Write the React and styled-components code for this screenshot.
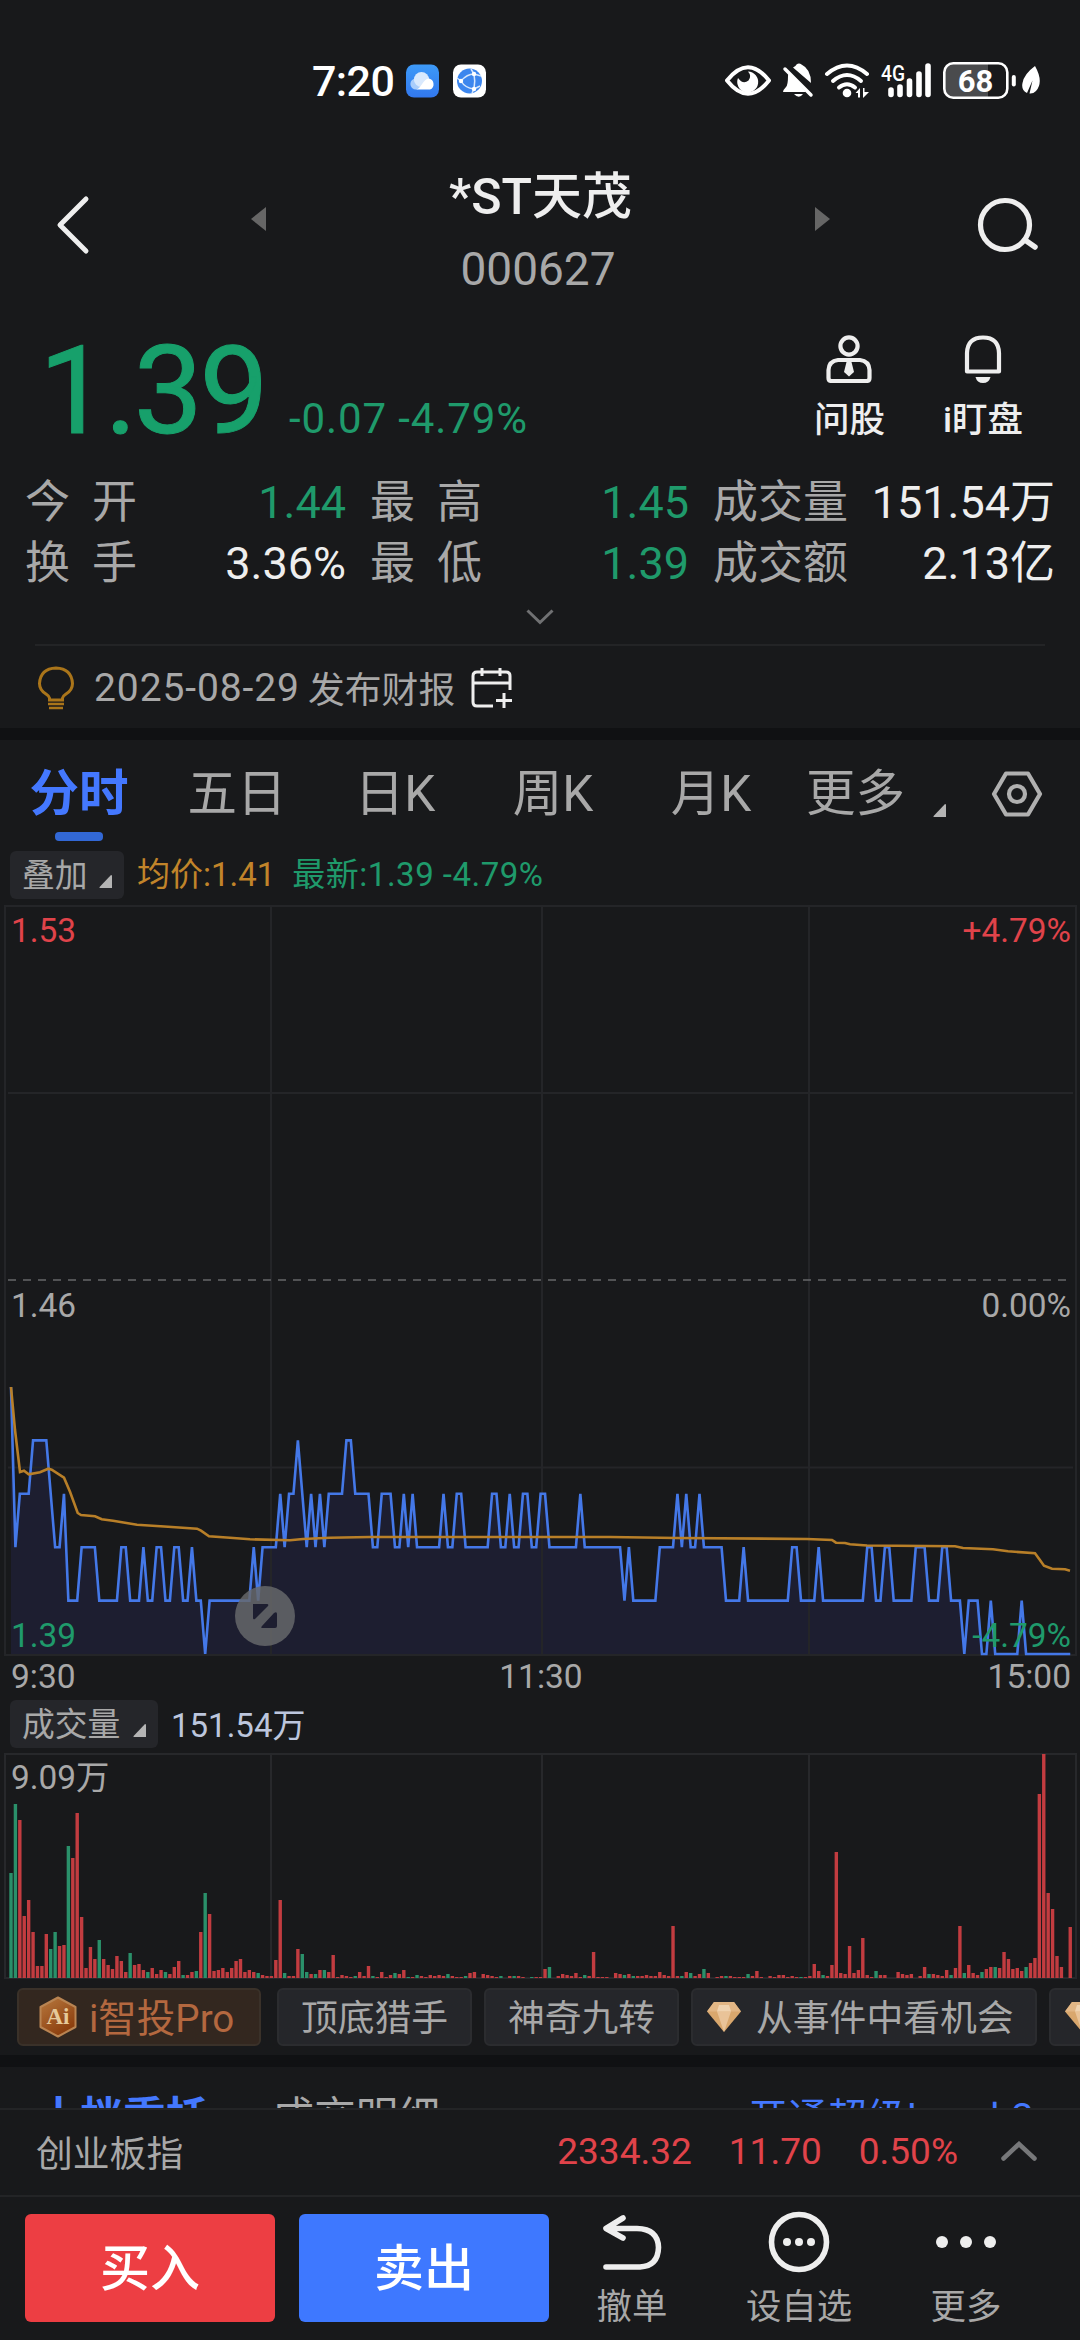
import { useState } from 'react';
import styled, { createGlobalStyle } from 'styled-components';

const GREEN = '#1f9a6b';
const RED = '#e0434a';
const BLUE = '#4478ff';
const GREY = '#a8a8a8';
const WHITE = '#eeeeee';

const GlobalStyle = createGlobalStyle`
  body {
    margin: 0;
    background: #18191b;
  }

  * {
    box-sizing: border-box;
  }

  svg {
    display: block;
    flex: none;
  }
`;

const Screen = styled.div`
  width: 1080px;
  height: 2340px;
  display: flex;
  flex-direction: column;
  overflow: hidden;
  background: #18191b;
  color: ${GREY};
  font-family: Roboto, 'Noto Sans CJK SC', sans-serif;
  white-space: nowrap;
`;

// status bar
const StatusBar = styled.div`
  height: 162px;
  display: flex;
  align-items: center;
  padding: 0 38px 0 312px;
  color: #fff;
`;

const Clock = styled.div`
  width: 93px;
  font-size: 43px;
  font-weight: 500;
  letter-spacing: -0.6px;
`;

const StatusIcons = styled.div`
  margin-left: auto;
  display: flex;
  align-items: center;
`;

// header
const Header = styled.header`
  height: 148px;
  display: flex;
  justify-content: space-between;
  padding: 0 40px 0 54px;
`;

const TitleNav = styled.div`
  flex: 1;
  display: flex;
  justify-content: space-between;
  padding: 0 146px 0 ${(props) => props.$left}px;
`;

const HeadIcon = styled.div`
  padding-top: ${(props) => props.$top}px;
`;

const Title = styled.div`
  padding-top: 5px;
  text-align: center;

  h1 {
    margin: 0;
    color: ${WHITE};
    font-size: 50px;
    font-weight: 500;
    line-height: 60px;
  }

  p {
    margin: 17px 0 0;
    padding-right: 5px;
    font-size: 46px;
    line-height: 50px;
  }
`;

// price
const Quote = styled.section`
  height: 162px;
  display: flex;
  padding: 16px 57px 0 39px;
`;

const Price = styled.div`
  width: 250px;
  color: #17a06b;
  font-size: 123px;
  font-weight: 400;
  line-height: 130px;
  letter-spacing: -3.4px;
  -webkit-text-stroke: 1px #17a06b;
`;

const Change = styled.div`
  padding-top: 68px;
  color: ${GREEN};
  font-size: 42px;
  line-height: 50px;
  letter-spacing: 0.9px;
`;

const Shortcuts = styled.div`
  margin-left: auto;
  display: flex;
  gap: 58px;
  padding-top: 9px;
`;

const Shortcut = styled.div`
  display: flex;
  flex-direction: column;
  align-items: center;
  gap: 16px;
  color: ${WHITE};
  font-size: 35.5px;
  font-weight: 500;
  line-height: 42px;
`;

const Stats = styled.section`
  display: grid;
  grid-template-columns: 321px 319px 342px;
  grid-auto-rows: 61px;
  column-gap: 24px;
  padding-left: 25px;
`;

const Stat = styled.div`
  display: flex;
  justify-content: space-between;
  font-size: 45px;
  line-height: 61px;
`;

const StatLabel = styled.div`
  min-width: 112px;
  display: flex;
  justify-content: space-between;
`;

const StatValue = styled.div`
  color: ${(props) => (props.$down ? GREEN : WHITE)};
`;

const Expander = styled.div`
  height: 52px;
  margin: 0 35px;
  padding-top: 15px;
  display: flex;
  justify-content: center;
  border-bottom: 2px solid #232426;
`;

const Notice = styled.div`
  height: 82px;
  display: flex;
  align-items: center;
  padding: 2px 0 0 37px;
  font-size: 36.8px;

  .date {
    width: 214px;
    margin-left: 19px;
    font-size: 39px;
    letter-spacing: 0.9px;
  }

  .text {
    margin-right: 16px;
    padding-bottom: 3px;
  }
`;

const Band = styled.div`
  height: 12px;
  flex: none;
  background: #101113;
`;

// chart tabs
const Tabs = styled.nav`
  height: 106px;
  display: grid;
  grid-template-columns: repeat(5, 158px) 1fr;
  font-size: 49.5px;
  line-height: 108px;
`;

const Tab = styled.div`
  position: relative;
  text-align: center;
  cursor: pointer;
  color: ${(props) => (props.$active ? BLUE : GREY)};
  font-weight: ${(props) => (props.$active ? 700 : 400)};

  &::after {
    content: '';
    display: ${(props) => (props.$active ? 'block' : 'none')};
    position: absolute;
    left: 55px;
    bottom: 7px;
    width: 48px;
    height: 9px;
    border-radius: 4px;
    background: #3268d6;
  }
`;

const MoreTab = styled.div`
  display: flex;
  align-items: center;
  padding-left: 16px;

  .corner {
    margin: 32px 45px 0 28px;
  }
`;

const Legend = styled.div`
  height: ${(props) => props.$height}px;
  display: flex;
  align-items: flex-start;
  padding: ${(props) => props.$top}px 0 0 10px;
  font-size: 33px;
  line-height: 48px;
`;

const Picker = styled.div`
  width: ${(props) => props.$width}px;
  height: 48px;
  display: flex;
  align-items: center;
  justify-content: space-between;
  padding: 2px 12px 0;
  border-radius: 6px;
  background: #25262a;
  font-size: 32.8px;

  svg {
    margin-top: 10px;
  }
`;

const LegendItem = styled.div`
  margin-left: ${(props) => props.$gap}px;
  padding-top: ${(props) => props.$top || 0}px;
  color: ${(props) => props.$color};
  letter-spacing: ${(props) => props.$spacing || 0}px;
`;

const ChartBox = styled.div`
  position: relative;
  height: ${(props) => props.$height}px;
`;

const AxisLabel = styled.span`
  position: absolute;
  ${(props) => (props.$right ? 'right: 9px;' : 'left: 11px;')}
  top: ${(props) => props.$top}px;
  color: ${(props) => props.$color || GREY};
  font-size: 33.4px;
  line-height: 40px;
`;

const ZoomButton = styled.div`
  position: absolute;
  left: 235px;
  top: 681px;
  width: 60px;
  height: 60px;
  display: flex;
  align-items: center;
  justify-content: center;
  border-radius: 50%;
  background: rgba(104, 105, 107, 0.83);
`;

const TimeAxis = styled.div`
  height: 39px;
  display: grid;
  grid-template-columns: 1fr 1fr 1fr;
  padding: 0 9px 0 11px;
  font-size: 33.5px;
  line-height: 39px;

  span:nth-child(2) {
    text-align: center;
  }

  span:nth-child(3) {
    text-align: right;
  }
`;

// tool chips
const Chips = styled.div`
  height: 74px;
  display: flex;
  gap: 12px;
  padding: 7px 0 0 17px;
  overflow: hidden;
`;

const Chip = styled.div`
  width: ${(props) => props.$width}px;
  height: 58px;
  flex: none;
  display: flex;
  align-items: center;
  justify-content: ${(props) => (props.$icon ? 'flex-start' : 'center')};
  padding-left: ${(props) => (props.$icon ? 14 : 0)}px;
  border: 2px solid #2b2c2f;
  border-radius: 6px;
  background: #25262a;
  font-size: 36.8px;

  span {
    padding-bottom: 4px;
  }

  svg + span {
    margin-left: 15px;
  }
`;

const ProChip = styled(Chip)`
  margin-right: 4px;
  padding-left: 20px;
  border-color: #3a3129;
  background: #33271f;
  color: #b4683f;
  font-size: 38.5px;

  svg + span {
    margin-left: 12px;
  }
`;

const PanelTabs = styled.div`
  height: 41px;
  display: flex;
  padding: 26px 46px 0 37px;
  overflow: hidden;
  font-size: 42px;
  line-height: 50px;

  .active {
    width: 235px;
    color: ${BLUE};
    font-size: 43px;
    font-weight: 700;
  }

  .link {
    margin-left: auto;
    color: ${BLUE};
    font-size: 39px;
    letter-spacing: 0.6px;
  }
`;

// bottom area
const IndexBar = styled.div`
  height: 89px;
  display: flex;
  align-items: center;
  padding: 0 43px 4px 36px;
  border-top: 2px solid #232426;
  border-bottom: 2px solid #232426;
  font-size: 36.8px;

  .figures {
    margin-left: auto;
    display: flex;
    gap: 37px;
    margin-right: 43px;
    padding-top: 2px;
    color: ${RED};
    font-size: 37px;
  }
`;

const Actions = styled.footer`
  height: 143px;
  display: flex;
  padding: 14px 0 0 25px;
`;

const TradeButton = styled.button`
  width: 250px;
  height: 108px;
  margin: 3px 24px 0 0;
  padding: 2px 0 0;
  border: 0;
  border-radius: 6px;
  background: ${(props) => props.$color};
  color: #fff;
  font: 500 50px/106px Roboto, 'Noto Sans CJK SC', sans-serif;
`;

const Action = styled.div`
  width: ${(props) => props.$width}px;
  display: flex;
  flex-direction: column;
  align-items: center;
  font-size: 35.4px;
  line-height: 44px;

  svg {
    margin-bottom: 12px;
  }
`;

// minute index and price step above 1.39
const PRICE = [
  [0, 5], [1, 2], [2, 3], [4, 3], [5, 4], [8, 4], [10, 2], [11, 2], [12, 3], [13, 1], [15, 1], [16, 2],
  [19, 2], [20, 1], [24, 1], [25, 2], [26, 2], [27, 1], [29, 1], [30, 2], [31, 1], [32, 1], [33, 2],
  [34, 2], [35, 1], [36, 1], [37, 2], [38, 2], [39, 1], [40, 1], [41, 2], [42, 1], [43, 1], [44, 0],
  [45, 1], [54, 1], [55, 2], [56, 1], [57, 2], [60, 2], [61, 3], [62, 2], [63, 3], [64, 3], [65, 4],
  [67, 2], [68, 3], [69, 2], [70, 3], [71, 2], [72, 3], [75, 3], [76, 4], [77, 4], [78, 3], [81, 3],
  [82, 2], [83, 2], [84, 3], [86, 3], [87, 2], [88, 2], [89, 3], [90, 2], [91, 3], [92, 2], [97, 2],
  [98, 3], [99, 2], [100, 2], [101, 3], [102, 3], [103, 2], [108, 2], [109, 3], [110, 3], [111, 2],
  [112, 2], [113, 3], [114, 2], [115, 2], [116, 3], [117, 3], [118, 2], [119, 2], [120, 3], [121, 3],
  [122, 2], [128, 2], [129, 3], [130, 2], [138, 2], [139, 1], [140, 2], [141, 1], [146, 1], [147, 2],
  [150, 2], [151, 3], [152, 2], [153, 3], [154, 2], [155, 2], [156, 3], [157, 2], [161, 2], [162, 1],
  [165, 1], [166, 2], [167, 1], [176, 1], [177, 2], [178, 2], [179, 1], [182, 1], [183, 2], [184, 1],
  [193, 1], [194, 2], [195, 2], [196, 1], [197, 1], [198, 2], [199, 2], [200, 1], [204, 1], [205, 2],
  [207, 2], [208, 1], [210, 1], [211, 2], [212, 2], [213, 1], [215, 1], [216, 0], [217, 1], [219, 1],
  [220, 0], [221, 0], [222, 1], [223, 0], [228, 0], [229, 1], [230, 0], [240, 0],
];

const AVERAGE =
  '11,482 15,525 20,567 24,565.7 28.7,569.3 40,567.3 48.3,563.7 51.7,564.7 64,572.7 70,586.7 77.7,608 ' +
  '81,610 95,611.3 101.7,614.3 113,615.7 125,617.7 137,619.7 168,621.7 197,623.7 201,625.7 209,631.3 ' +
  '230,632.7 250,634.3 290,635.3 303,634 330,632.7 370,632 610,632 677,633 807,634 832,635 836,637.7 ' +
  '845,638 850,639.3 867,640.5 955,641.3 963,643 993,644.3 1008,646.3 1035,648.3 1039,653.7 1044,660.7 ' +
  '1052,663.7 1065,664.3 1070,665.7';

// bar heights per minute, negative ones are drawn green
const VOLUME = [
  -105, -174, 158, 62, 78, 46, 12, 12, 44, -29, -46, 32, 33, -132, 120, 165, 61, 10, 31, 19,
  -38, 19, 13, 9, 22, 17, 6, -25, 13, 14, 8, -6, 10, 4, 8, -6, 4, 11, 17, -3,
  3, 6, -7, 46, -85, 64, 7, 8, 10, 6, 10, 17, 19, 6, 8, 6, -5, 3, 2, 2,
  18, 78, -5, 2, 2, 29, -24, -6, 4, -4, 8, -8, 6, 23, 1, 3, 2, 1, -2, 6,
  2, 12, -2, 1, 6, 1, 3, -5, 4, 8, -1, 1, -3, 2, 1, 3, 2, 3, 2, -4,
  2, 1, 1, -2, 5, 6, 0, 4, 3, 2, 1, -2, 0, 2, -2, 2, 1, 0, -1, 1,
  1, 9, -11, 0, 2, 4, 3, 2, 5, 1, -3, 2, 26, 1, 1, 1, 0, 5, 4, -3,
  4, -2, 2, 2, 3, 2, 2, 6, 3, 2, 52, 2, -2, 6, -5, 2, 4, -9, 5, 0,
  1, 2, -2, 2, 1, 1, 1, -4, 2, 7, 1, 0, 2, 1, 3, 3, 1, 2, 1, -1,
  1, 2, 14, 7, -3, 2, 13, 126, 5, 4, 32, 5, 8, 40, 3, 1, -7, 3, 3, 0,
  0, 6, 4, 3, 4, 0, 2, 11, -4, 4, 3, 2, 8, -3, 10, 52, -5, 13, 5, 3,
  -6, 9, 11, -11, 10, 26, 19, 9, 10, 7, -11, 15, 20, 184, 224, 85, 69, 22, 11, 0,
  51,
];

const minuteX = (i) => 11 + i * 4.4135;

const stats = [
  { label: '今开', value: '1.44', down: true },
  { label: '最高', value: '1.45', down: true },
  { label: '成交量', value: '151.54万' },
  { label: '换手', value: '3.36%' },
  { label: '最低', value: '1.39', down: true },
  { label: '成交额', value: '2.13亿' },
];

const Corner = ({ size = 13, className }) => (
  <svg className={className} width={size} height={size} viewBox="0 0 13 13">
    <path d="M12 0Q13 0 13 1V13H1Q0 13 .6 12Z" fill="#b4b4b4" />
  </svg>
);

const AppIcons = () => (
  <svg width="82" height="34" viewBox="0 0 82 34">
    <defs>
      <linearGradient id="sky" x1="0" y1="0" x2="0" y2="1">
        <stop offset="0" stopColor="#3d9af8" />
        <stop offset="1" stopColor="#3278ee" />
      </linearGradient>
    </defs>
    <rect x="1" y="0.5" width="33" height="33" rx="8" fill="url(#sky)" />
    <circle cx="11" cy="20" r="5.6" fill="#a9cdfb" />
    <circle cx="16.5" cy="15.5" r="7.6" fill="#d9e9fd" />
    <path d="M11 25.500C16 25 18 15 24 14.500A5.800 5.800 0 0 1 25 25.500Z" fill="#fff" />
    <rect x="48" y="0.500" width="33" height="33" rx="8" fill="#fff" />
    <circle cx="64.500" cy="17" r="12.500" fill="#3c86ee" />
    <g fill="none" stroke="#d6e7fd" strokeWidth="1.500">
      <path d="M56 17Q62 10 69 10Q70.500 17 69 25Q60 24 56 17M69 10L66 5M69 10L76 12M69 25L75 22M69 25L67 29M56 17L52 14" />
    </g>
    <circle cx="56" cy="17" r="2.200" fill="#fff" />
    <circle cx="69" cy="10" r="2.200" fill="#fff" />
    <circle cx="69" cy="25" r="2.200" fill="#fff" />
  </svg>
);

// eye, muted bell, wifi, signal, battery and leaf
const SystemIcons = () => (
  <svg width="320" height="40" viewBox="722 61 320 40">
    <path d="M727 80.500Q748 54 769 80.500Q748 107 727 80.500Z" fill="none" stroke="#fff" strokeWidth="4" strokeLinejoin="round" />
    <path d="M738 78A10.500 10.500 0 1 0 748 71.500Q752 76 748.500 80.500Q743 85 738 78Z" fill="#fff" />
    <path d="M783 92Q783 90 786 87Q788 85 788 76Q788 74 789 73L806 92Z" fill="#fff" />
    <path d="M793 67.500Q796 66 796.500 64.500Q799 62.500 801.500 64.500Q811 69 811 83Z" fill="#fff" />
    <path d="M785 69L811 95" stroke="#fff" strokeWidth="3.500" strokeLinecap="round" />
    <path d="M794 94H803Q799 99.500 794 94Z" fill="#fff" />
    <g fill="none" stroke="#fff" strokeWidth="4" strokeLinecap="round">
      <path d="M827 74Q847 57 867 74" />
      <path d="M833 81Q847 69 861 81" />
      <path d="M839 87.500Q847 81 855 87.500" />
    </g>
    <circle cx="847" cy="93" r="4.300" fill="#fff" />
    <path d="M855.500 93L860 88V97.500H858V93ZM863 88H864.500V92H869L863 98Z" fill="#fff" />
    <text x="881" y="80.500" fontSize="22" fontWeight="500" fill="#fff" textLength="24" lengthAdjust="spacingAndGlyphs">4G</text>
    <g stroke="#fff" strokeWidth="5.600" strokeLinecap="round">
      <path d="M891 90V94.500M900 87V94.500M909.500 81V94.500M919 74V94.500M928 66V94.500" />
    </g>
    <path d="M953 64H988V97H953Q945 97 945 89V72Q945 64 953 64Z" fill="#4a4b4d" />
    <rect x="944.300" y="63.300" width="63" height="34.500" rx="9" fill="none" stroke="#fff" strokeWidth="2.600" />
    <text x="975.500" y="92" fontSize="31" fontWeight="700" fill="#fff" textAnchor="middle">68</text>
    <path d="M1013.800 77V84.500" stroke="#fff" strokeWidth="4" strokeLinecap="round" />
    <path d="M1035 66Q1044 82 1036 91Q1033 94 1029.500 93.500L1032.500 80.500L1027 93Q1021 90 1022.500 83Q1024 74 1035 66Z" fill="#fff" />
  </svg>
);

const Diamond = () => (
  <svg width="34" height="30" viewBox="0 0 34 30">
    <path d="M7 0H27L34 9.500L17 30L0 9.500Z" fill="#d9a76d" />
    <path d="M7 0H27L34 9.500H0Z" fill="#e2b685" />
    <path d="M10 9.500H24L17 30Z" fill="#e9c398" />
    <path d="M12 3H22L24 9.500H10Z" fill="#f0d3b0" />
  </svg>
);

const PriceChart = () => {
  const line = PRICE.map(([i, step]) => `${minuteX(i)},${749 - step * 53.4}`).join(' ');

  return (
    <ChartBox $height={752}>
      <svg width="1080" height="752" viewBox="0 0 1080 752">
        <polygon points={`11,749 ${line}`} fill="#1d1e30" />
        <g stroke="#242528" strokeWidth="2" fill="none">
          <rect x="5" y="1" width="1071" height="749" />
          <path d="M271 1V750M542 1V750M809 1V750" />
          <path d="M8 188H1073M8 562.500H1073" />
        </g>
        <path d="M8 375H1073" stroke="#66676a" strokeWidth="1.500" strokeDasharray="8 7" />
        <polyline points={line} fill="none" stroke="#4478e8" strokeWidth="2.600" />
        <polyline points={AVERAGE} fill="none" stroke="#b87f28" strokeWidth="2.600" />
      </svg>
      <AxisLabel $top={6} $color={RED}>1.53</AxisLabel>
      <AxisLabel $top={6} $color={RED} $right>+4.79%</AxisLabel>
      <AxisLabel $top={381}>1.46</AxisLabel>
      <AxisLabel $top={381} $right>0.00%</AxisLabel>
      <AxisLabel $top={711} $color={GREEN}>1.39</AxisLabel>
      <AxisLabel $top={711} $color={GREEN} $right>-4.79%</AxisLabel>
      <ZoomButton>
        <svg width="26" height="26" viewBox="0 0 26 26" fill="#1d1e30">
          <path d="M1 1H15Q17 1 16 3L3 16Q1 17 1 15Z" />
          <path d="M25 11V23Q25 25 23 25H11Q8 25 10 23L22 10Q25 8 25 11Z" />
        </svg>
      </ZoomButton>
    </ChartBox>
  );
};

const VolumeChart = () => (
  <ChartBox $height={229}>
    <svg width="1080" height="229" viewBox="0 0 1080 229">
      <g stroke="#27282b" strokeWidth="2" fill="none">
        <rect x="5" y="2" width="1071" height="224" />
        <path d="M271 2V226M542 2V226M809 2V226" />
      </g>
      {VOLUME.map((v, i) => (
        <rect
          key={i}
          x={minuteX(i) - 1.7}
          y={226 - Math.abs(v)}
          width="3.4"
          height={Math.abs(v)}
          fill={v < 0 ? '#2a906a' : '#c23c40'}
        />
      ))}
    </svg>
    <AxisLabel $top={6}>9.09万</AxisLabel>
  </ChartBox>
);

const App = () => {
  const [tab, setTab] = useState('分时');

  return (
    <>
      <GlobalStyle />
      <Screen>
        <StatusBar>
          <Clock>7:20</Clock>
          <AppIcons />
          <StatusIcons>
            <SystemIcons />
          </StatusIcons>
        </StatusBar>

        <Header>
          <HeadIcon $top={33}>
            <svg width="36" height="60" viewBox="0 0 36 60">
              <path d="M32 4L6 30L32 56" fill="none" stroke={WHITE} strokeWidth="5" strokeLinecap="round" strokeLinejoin="round" />
            </svg>
          </HeadIcon>
          <TitleNav $left={161}>
            <HeadIcon $top={45}>
              <svg width="15" height="24" viewBox="0 0 15 24"><path d="M15 0V24L0 12Z" fill="#666" /></svg>
            </HeadIcon>
            <Title>
              <h1>*ST天茂</h1>
              <p>000627</p>
            </Title>
            <HeadIcon $top={45}>
              <svg width="15" height="24" viewBox="0 0 15 24"><path d="M0 0V24L15 12Z" fill="#666" /></svg>
            </HeadIcon>
          </TitleNav>
          <HeadIcon $top={34}>
            <svg width="64" height="60" viewBox="0 0 64 60">
              <circle cx="29" cy="29" r="24.500" fill="none" stroke={WHITE} strokeWidth="5.200" />
              <path d="M49 44L59 51" stroke={WHITE} strokeWidth="5.500" strokeLinecap="round" />
            </svg>
          </HeadIcon>
        </Header>

        <Quote>
          <Price>1.39</Price>
          <Change>-0.07 -4.79%</Change>
          <Shortcuts>
            <Shortcut>
              <svg width="48" height="48" viewBox="0 0 48 48">
                <g fill="none" stroke={WHITE} strokeWidth="4.200">
                  <circle cx="24" cy="11" r="8.600" />
                  <path d="M13 25H35Q44 26 44.500 35V43Q44.500 46 41.500 46H6.500Q3.500 46 3.500 43V35Q4 26 13 25Z" />
                </g>
                <path d="M21.500 27H26.500L29 37L24 41.500L19 37Z" fill={WHITE} />
              </svg>
              问股
            </Shortcut>
            <Shortcut>
              <svg width="40" height="48" viewBox="0 0 40 48">
                <path d="M4 36.500V18Q4.500 2.500 20 2.500Q35.500 2.500 36 18V36.500Z" fill="none" stroke={WHITE} strokeWidth="4.200" strokeLinejoin="round" />
                <path d="M12.500 42H27.500Q26 48 20 48Q14 48 12.500 42Z" fill={WHITE} />
              </svg>
              i盯盘
            </Shortcut>
          </Shortcuts>
        </Quote>

        <Stats>
          {stats.map((el) => (
            <Stat key={el.label}>
              <StatLabel>
                {el.label.length === 2 ? el.label.split('').map((c) => <span key={c}>{c}</span>) : el.label}
              </StatLabel>
              <StatValue $down={el.down}>{el.value}</StatValue>
            </Stat>
          ))}
        </Stats>

        <Expander>
          <svg width="28" height="16" viewBox="0 0 28 16">
            <path d="M1.500 1.500L14 13.500L26.500 1.500" fill="none" stroke="#707173" strokeWidth="3" />
          </svg>
        </Expander>

        <Notice>
          <svg width="38" height="44" viewBox="0 0 38 44" fill="none" stroke="#aa751a" strokeWidth="3">
            <path d="M12.500 34V32Q12 30 9 28Q2.500 24 2.500 17.500Q3.500 2.500 19 2Q34.500 2.500 35.500 17.500Q35.500 24 29 28Q26 30 25.500 32V34Z" />
            <path d="M11 38H27M12 42H26" strokeWidth="2.600" />
          </svg>
          <span className="date">2025-08-29</span>
          <span className="text">发布财报</span>
          <svg width="42" height="42" viewBox="0 0 42 42" fill="none" stroke={WHITE} strokeWidth="3">
            <path d="M39 23V9Q39 5 35 5H6Q2 5 2 9V35Q2 39 6 39H22M2 16H39M11 1V9M29 1V9M25 33.500H41M33 26V41" />
          </svg>
        </Notice>

        <Band />

        <Tabs>
          {['分时', '五日', '日K', '周K', '月K'].map((el) => (
            <Tab key={el} $active={tab === el} onClick={() => setTab(el)}>{el}</Tab>
          ))}
          <MoreTab>
            更多
            <Corner className="corner" />
            <svg width="52" height="46" viewBox="0 0 52 46" fill="none" stroke="#b0b0b0" strokeWidth="4.200">
              <path d="M15 2.500H37L49 23L37 43.500H15L3 23Z" strokeLinejoin="round" />
              <circle cx="26" cy="23" r="8" />
            </svg>
          </MoreTab>
        </Tabs>

        <Legend $height={59} $top={5}>
          <Picker $width={114}>叠加<Corner /></Picker>
          <LegendItem $gap={13} $color="#c1842a">均价:1.41</LegendItem>
          <LegendItem $gap={17} $color={GREEN} $spacing={0.5}>最新:1.39 -4.79%</LegendItem>
        </Legend>

        <PriceChart />
        <TimeAxis>
          <span>9:30</span>
          <span>11:30</span>
          <span>15:00</span>
        </TimeAxis>

        <Legend $height={56} $top={4}>
          <Picker $width={148}>成交量<Corner /></Picker>
          <LegendItem $gap={13} $top={2} $color="#bcc6dd">151.54万</LegendItem>
        </Legend>
        <VolumeChart />

        <Chips>
          <ProChip $width={244} $icon>
            <svg width="38" height="42" viewBox="0 0 38 42">
              <defs>
                <linearGradient id="amber" x1="0" y1="0" x2="0.6" y2="1">
                  <stop offset="0" stopColor="#b8793f" />
                  <stop offset="1" stopColor="#8a3c0c" />
                </linearGradient>
              </defs>
              <path d="M19 1.500L36.500 11V31L19 40.500L1.500 31V11Z" fill="url(#amber)" stroke="#b98452" strokeWidth="2" strokeLinejoin="round" />
              <text x="19" y="28" fontSize="23" fontWeight="700" fontFamily="'Liberation Serif', serif" fill="#e6c99a" textAnchor="middle">Ai</text>
            </svg>
            <span>i智投Pro</span>
          </ProChip>
          <Chip $width={195}><span>顶底猎手</span></Chip>
          <Chip $width={195}><span>神奇九转</span></Chip>
          <Chip $width={346} $icon><Diamond /><span>从事件中看机会</span></Chip>
          <Chip $width={346} $icon><Diamond /></Chip>
        </Chips>

        <Band />

        <PanelTabs>
          <div className="active">十档委托</div>
          <div>成交明细</div>
          <div className="link">开通超级Level-2</div>
        </PanelTabs>

        <IndexBar>
          创业板指
          <div className="figures">
            <span>2334.32</span>
            <span>11.70</span>
            <span>0.50%</span>
          </div>
          <svg width="36" height="20" viewBox="0 0 36 20">
            <path d="M2.500 17.500L18 3L33.500 17.500" fill="none" stroke="#77787a" strokeWidth="4.500" strokeLinecap="round" />
          </svg>
        </IndexBar>

        <Actions>
          <TradeButton $color="#ed3e43">买入</TradeButton>
          <TradeButton $color="#3e78ff">卖出</TradeButton>
          <Action $width={118}>
            <svg width="60" height="62" viewBox="0 0 60 62" fill="none" stroke={WHITE} strokeWidth="5.600" strokeLinecap="round" strokeLinejoin="round">
              <path d="M21 7L4 17.500L21 27M5 17.500H35Q56 18 56.500 36.500Q56 55 38 56H4" />
            </svg>
            撤单
          </Action>
          <Action $width={216}>
            <svg width="62" height="62" viewBox="0 0 62 62">
              <circle cx="31" cy="31" r="27.500" fill="none" stroke={WHITE} strokeWidth="5.600" />
              <circle cx="19" cy="31" r="4" fill={WHITE} />
              <circle cx="31" cy="31" r="4" fill={WHITE} />
              <circle cx="43" cy="31" r="4" fill={WHITE} />
            </svg>
            设自选
          </Action>
          <Action $width={118}>
            <svg width="62" height="62" viewBox="0 0 62 62" fill={WHITE}>
              <circle cx="7" cy="31" r="6" />
              <circle cx="31" cy="31" r="6" />
              <circle cx="55" cy="31" r="6" />
            </svg>
            更多
          </Action>
        </Actions>
      </Screen>
    </>
  );
};

export default App;
